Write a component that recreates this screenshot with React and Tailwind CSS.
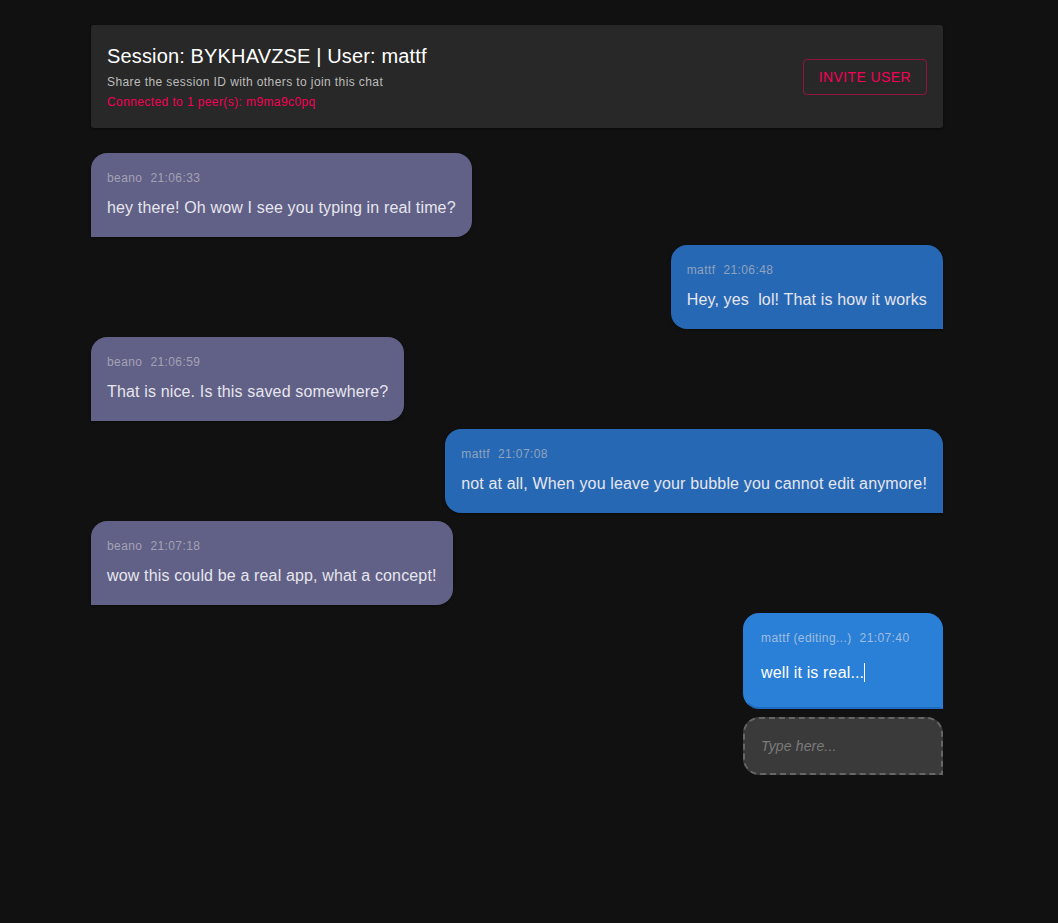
import React from 'react';

const messages = [
    { id: 1, user: 'beano', time: '21:06:33', text: 'hey there! Oh wow I see you typing in real time?', mine: false },
    { id: 2, user: 'mattf', time: '21:06:48', text: 'Hey, yes\u00a0 lol! That is how it works', mine: true },
    { id: 3, user: 'beano', time: '21:06:59', text: 'That is nice. Is this saved somewhere?', mine: false },
    { id: 4, user: 'mattf', time: '21:07:08', text: 'not at all, When you leave your bubble you cannot edit anymore!', mine: true },
    { id: 5, user: 'beano', time: '21:07:18', text: 'wow this could be a real app, what a concept!', mine: false },
];

const Bubble = ({ msg }) => (
    <div className={`flex ${msg.mine ? 'justify-end' : 'justify-start'}`}>
        <div
            className={`px-4 pt-4 pb-[17px] shadow-[0_1px_3px_rgba(0,0,0,0.4)] ${
                msg.mine
                    ? 'bg-[#2768b5] rounded-t-2xl rounded-bl-2xl'
                    : 'bg-[#616086] rounded-t-2xl rounded-br-2xl'
            }`}
        >
            <div className={`text-xs leading-[18px] tracking-[0.4px] flex gap-2 ${msg.mine ? 'text-[#8ea3bd]' : 'text-[#a3a2b4]'}`}>
                <span>{msg.user}</span>
                <span>{msg.time}</span>
            </div>
            <p className="mt-[9px] text-base leading-6 tracking-[0.15px] text-[#e6e6ee]">{msg.text}</p>
        </div>
    </div>
);

export default function App() {
    return (
        <div className="min-h-[923px] bg-[#111111] pt-[25px] font-['Liberation_Sans',Arial,sans-serif]">
            <div className="w-[852px] ml-[91px]">

                {/* Header */}
                <div className="bg-[#282828] rounded-[3px] px-4 pt-4 pb-4 flex items-center justify-between shadow-[0_1px_3px_rgba(0,0,0,0.5)]">
                    <div>
                        <h1 className="text-xl leading-[31px] tracking-[0.15px] text-white">Session: BYKHAVZSE | User: mattf</h1>
                        <p className="text-xs leading-5 tracking-[0.4px] text-[#bdbdbd]">Share the session ID with others to join this chat</p>
                        <p className="text-xs leading-5 tracking-[0.4px] text-[#f50057]">Connected to 1 peer(s): m9ma9c0pq</p>
                    </div>
                    <button className="h-[36px] px-[15px] border border-[#f50057]/50 rounded text-sm tracking-[0.4px] text-[#f50057] uppercase">
                        Invite User
                    </button>
                </div>

                {/* Messages */}
                <div className="mt-[25px] flex flex-col gap-2">
                    {messages.map((m) => (
                        <Bubble key={m.id} msg={m} />
                    ))}

                    {/* Current editing bubble */}
                    <div className="flex justify-end">
                        <div className="w-[200px] h-[96px] bg-[#2a80d6] border-2 border-[#2b7fd8] border-b-[#1f6bc0] rounded-t-2xl rounded-bl-2xl px-4 pt-[14px]">
                            <div className="text-xs leading-[18px] tracking-[0.4px] flex gap-2 text-[#9fbde0]">
                                <span>mattf (editing...)</span>
                                <span>21:07:40</span>
                            </div>
                            <p className="mt-[14px] text-base leading-6 tracking-[0.15px] text-white">
                                well it is real...<span className="inline-block w-px h-[19px] bg-white align-[-4px]"></span>
                            </p>
                        </div>
                    </div>

                    <div className="flex justify-end">
                        <div className="w-[200px] h-[58px] bg-[#3a3a3a] border-2 border-dashed border-[#666666] rounded-t-2xl rounded-bl-2xl px-4 flex items-center">
                            <span className="text-sm italic tracking-[0.15px] text-[#7a7a7a]">Type here...</span>
                        </div>
                    </div>
                </div>
            </div>
        </div>
    );
}
